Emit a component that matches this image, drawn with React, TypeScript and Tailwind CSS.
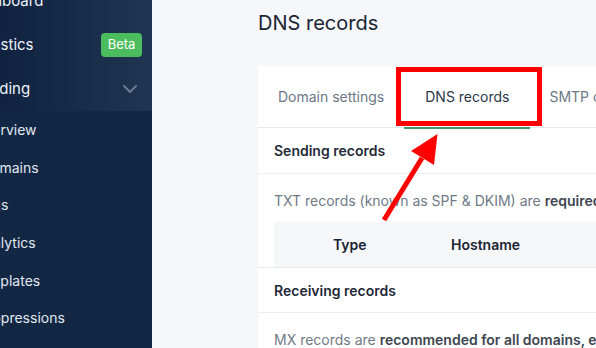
import React from "react";

const font = { fontFamily: "Inter, 'Noto Sans', sans-serif" };

function TopItem({ label, ml, children }: { label: string; ml: string; children?: React.ReactNode }) {
  return (
    <div className="h-[44px] flex items-center justify-between pr-[10px]">
      <span className={`text-[15px] text-[#eef2f7] whitespace-nowrap ${ml}`}>{label}</span>
      {children}
    </div>
  );
}

function SubItem({ label, ml }: { label: string; ml: string }) {
  return (
    <div className="h-[37.6px] flex items-center">
      <span className={`text-[14px] text-[#e2e8f0] whitespace-nowrap ${ml}`}>{label}</span>
    </div>
  );
}

export default function App() {
  return (
    <div className="relative w-[596px] h-[348px] overflow-hidden flex bg-[#f5f7fa]" style={font}>
      {/* Sidebar */}
      <aside className="w-[152px] shrink-0 h-full bg-[#112744] overflow-hidden flex flex-col">
        <div className="bg-gradient-to-r from-[#0f2341] to-[#1f3551] -mt-[21px]">
          <TopItem label="Dashboard" ml="-ml-[34px]" />
          <TopItem label="Statistics" ml="-ml-[31px]">
            <span className="h-[24px] w-[41px] rounded-[4px] bg-[#4bbd5e] text-white text-[13px] flex items-center justify-center">
              Beta
            </span>
          </TopItem>
          <TopItem label="Sending" ml="-ml-[28px]">
            <svg width="14" height="8" viewBox="0 0 14 8" fill="none" stroke="#6b7b8f" strokeWidth="2" strokeLinecap="round" strokeLinejoin="round" className="mr-[5px]">
              <path d="M1 1l6 6 6-6" />
            </svg>
          </TopItem>
        </div>
        <div className="bg-[#112744]">
          <SubItem label="Overview" ml="-ml-[26px]" />
          <SubItem label="Domains" ml="-ml-[19px]" />
          <SubItem label="Logs" ml="-ml-[24px]" />
          <SubItem label="Analytics" ml="-ml-[25px]" />
          <SubItem label="Templates" ml="-ml-[28px]" />
          <SubItem label="Suppressions" ml="-ml-[25px]" />
        </div>
      </aside>

      {/* Main */}
      <main className="flex-1 h-full overflow-hidden pl-[106px] pt-[9px]">
        <h1 className="text-[20px] leading-[28px] text-[#1a2433] whitespace-nowrap">DNS records</h1>
        <div className="relative mt-[29px] w-[420px] bg-white">
          {/* Tabs */}
          <div className="h-[62px] flex border-b border-[#e6e8ec]">
            <div className="px-5 flex items-center text-[14px] text-[#6b7785] whitespace-nowrap">Domain settings</div>
            <div className="relative px-[21px] flex items-center text-[14px] text-[#2d3748] whitespace-nowrap">
              DNS records
              <span className="absolute left-0 right-0 bottom-[-2px] h-[2px] bg-[#3f9b6d]" />
            </div>
            <div className="pl-[19px] pr-5 flex items-center text-[14px] text-[#6b7785] whitespace-nowrap">SMTP credentials</div>
          </div>
          {/* red highlight box */}
          <div className="absolute left-[138px] top-[1px] w-[146px] h-[59px] border-[5px] border-[#ff0000]" />

          {/* Sending records */}
          <div className="border-b border-[#e8eaee]">
            <div className="h-[46px] flex items-center px-4 border-b border-[#eceef1]">
              <span className="text-[14px] font-semibold text-[#1f2937] whitespace-nowrap">Sending records</span>
            </div>
            <div className="pt-[17px]">
              <p className="px-4 text-[14px] leading-[20px] text-[#6f7a86] whitespace-nowrap">
                TXT records (known as SPF &amp; DKIM) are <span className="font-semibold text-[#3d4550]">required</span> to send and receive email.
              </p>
              <div className="mt-[11px] ml-4 h-[45px] bg-[#f6f7f9] flex items-center text-[14px] font-semibold text-[#1a2433]">
                <div className="w-[177px] pl-[59px]">Type</div>
                <div>Hostname</div>
              </div>
            </div>
          </div>

          {/* Receiving records */}
          <div className="h-[45px] flex items-center px-4 border-b border-[#eceef1]">
            <span className="text-[14px] font-semibold text-[#1f2937] whitespace-nowrap">Receiving records</span>
          </div>
          <div className="pt-[17px] pb-4">
            <p className="px-4 text-[14px] leading-[20px] text-[#6f7a86] whitespace-nowrap">
              MX records are <span className="font-semibold text-[#3d4550]">recommended for all domains, even if you don't want to receive email</span>.
            </p>
          </div>
        </div>
      </main>

      {/* Arrow annotation */}
      <svg className="absolute left-0 top-0 pointer-events-none" width="596" height="348" viewBox="0 0 596 348">
        <line x1="384" y1="220" x2="422" y2="158" stroke="#ff0000" strokeWidth="5" />
        <polygon points="437.5,134 411,151 434,165" fill="#ff0000" />
      </svg>
    </div>
  );
}
